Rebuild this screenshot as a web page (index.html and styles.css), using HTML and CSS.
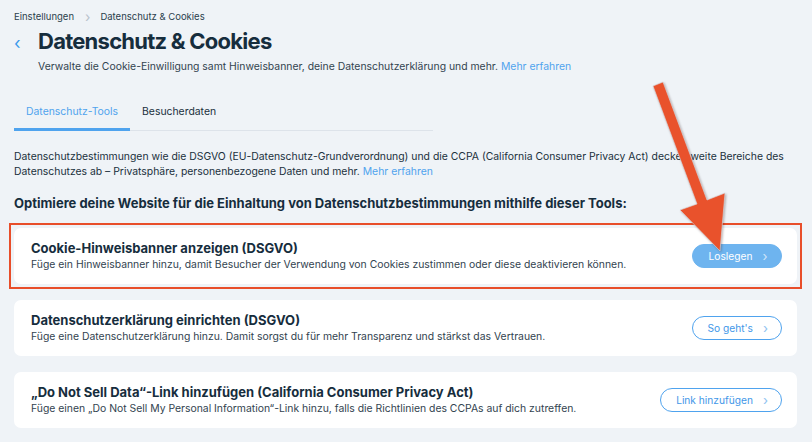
FILE: index.html
```html
<!DOCTYPE html>
<html lang="de">
<head>
	<meta charset="UTF-8">
	<title>Datenschutz &amp; Cookies</title>
	<link rel="stylesheet" href="styles.css">
</head>
<body>
	<div id="main">
		<div class="crumbs"><span>Einstellungen</span><span class="sep">&#8250;</span><span class="cur">Datenschutz &amp; Cookies</span></div>
		<div class="head">
			<a href="#" class="back">&#8249;</a>
			<div>
				<h1>Datenschutz &amp; Cookies</h1>
				<p class="sub">Verwalte die Cookie-Einwilligung samt Hinweisbanner, deine Datenschutzerklärung und mehr. <a href="#">Mehr erfahren</a></p>
			</div>
		</div>
		<ul class="tabs">
			<li class="on">Datenschutz-Tools</li>
			<li>Besucherdaten</li>
		</ul>
		<p class="intro">Datenschutzbestimmungen wie die DSGVO (EU-Datenschutz-Grundverordnung) und die CCPA (California Consumer Privacy Act) decken weite Bereiche des Datenschutzes ab – Privatsphäre, personenbezogene Daten und mehr. <a href="#">Mehr erfahren</a></p>
		<h2>Optimiere deine Website für die Einhaltung von Datenschutzbestimmungen mithilfe dieser Tools:</h2>
		<div class="mark">
			<div class="card">
				<div class="txt">
					<h3>Cookie-Hinweisbanner anzeigen (DSGVO)</h3>
					<p>Füge ein Hinweisbanner hinzu, damit Besucher der Verwendung von Cookies zustimmen oder diese deaktivieren können.</p>
				</div>
				<a href="#" class="btn fill">Loslegen <i>&#8250;</i></a>
			</div>
		</div>
		<div class="card">
			<div class="txt">
				<h3>Datenschutzerklärung einrichten (DSGVO)</h3>
				<p>Füge eine Datenschutzerklärung hinzu. Damit sorgst du für mehr Transparenz und stärkst das Vertrauen.</p>
			</div>
			<a href="#" class="btn">So geht's <i>&#8250;</i></a>
		</div>
		<div class="card">
			<div class="txt">
				<h3>„Do Not Sell Data“-Link hinzufügen (California Consumer Privacy Act)</h3>
				<p>Füge einen „Do Not Sell My Personal Information“-Link hinzu, falls die Richtlinien des CCPAs auf dich zutreffen.</p>
			</div>
			<a href="#" class="btn">Link hinzufügen <i>&#8250;</i></a>
		</div>
	</div>
	<svg class="arrow" width="812" height="442" viewBox="0 0 812 442">
		<polygon points="653,86 663,82 707,200 725,193 720,251 680,210 697,204" fill="#e9522c" stroke="#d8dde4" stroke-width="0.6"/>
	</svg>
</body>
</html>
```
FILE: styles.css
```css
*{ margin: 0; padding: 0; box-sizing: border-box;}
body{ background: #eff3f7; color: #162d3d; font-family: "Inter", "Liberation Sans", sans-serif; font-size: 11px;}
a{ text-decoration: none; color: #4fa3ee;}
li{ list-style: none;}
#main{ padding: 0 15px 0 14px;}
.crumbs{ display: flex; align-items: center; height: 14px; margin-top: 9px; font-size: 9.5px; color: #2b3f4d;}
.crumbs .sep{ margin: 0 10px 0 11px; color: #b8c2cc; font-size: 14px;}
.head{ display: flex; margin-top: 3px;}
.back{ width: 24px; padding-top: 8px; font-size: 17px; color: #3899ec; line-height: 18px;}
h1{ font-size: 22px; font-weight: 700; line-height: 30px; letter-spacing: -0.75px;}
.sub{ margin-top: 4px; font-size: 10.4px; color: #32434f; line-height: 14px;}
.tabs{ display: flex; width: 419px; margin-top: 31px; border-bottom: 1px solid #dde3ea;}
.tabs li{ padding: 0 12px 10px; font-size: 10.4px; line-height: 14px; color: #20303c; margin-bottom: -1px;}
.tabs li.on{ color: #4fa3ee; border-bottom: 3px solid #4fa3ee; padding-bottom: 9px;}
.intro{ margin-top: 18px; font-size: 10.4px; line-height: 15px; color: #20303c;}
h2{ margin-top: 15px; font-size: 13px; font-weight: 700; line-height: 18px;}
.mark{ margin: 11px -5px 0; padding: 3px; border: 2px solid #e84e2a;}
.card{ display: flex; align-items: center; justify-content: space-between; height: 56px; margin-top: 16px; padding: 0 15px 0 17px; background: #fff; border-radius: 7px;}
.mark .card{ margin-top: 0;}
.mark + .card{ margin-top: 11px;}
.card h3{ font-size: 13px; font-weight: 700; line-height: 17px;}
.card p{ font-size: 10.4px; line-height: 15px; color: #32434f;}
.btn{ display: flex; align-items: center; justify-content: center; height: 24px; padding: 0 13px 0 15px; border: 1px solid #4fa3ee; border-radius: 12px; font-size: 10.2px; color: #3f97e8;}
.btn i{ font-style: normal; margin-left: 10px; font-size: 13px; color: #8fc2f0;}
.btn.fill{ width: 90px; background: #6eb4ef; border-color: #6eb4ef; color: #fff;}
.btn.fill i{ color: #cfe5fa;}
.arrow{ position: absolute; left: 0; top: 0; filter: drop-shadow(1px 1px 1px rgba(60,40,40,0.35));}
```
